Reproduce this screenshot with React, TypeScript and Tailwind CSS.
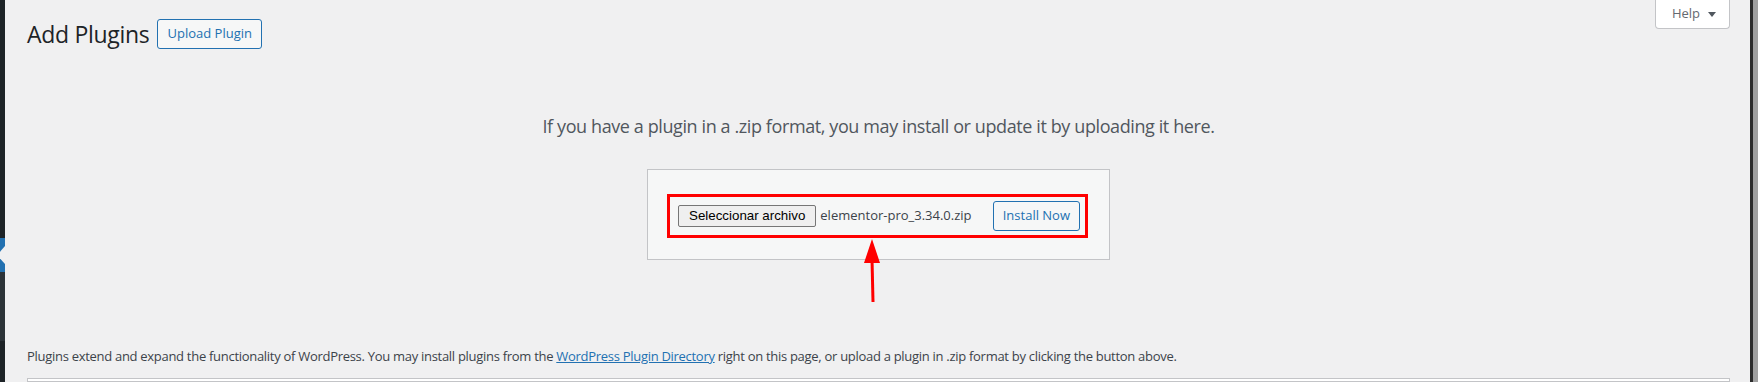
const sans = "font-['Segoe_UI','Open_Sans','Noto_Sans',sans-serif]";

function Sidebar() {
  return (
    <aside className="relative flex w-[5px] shrink-0 flex-col">
      <div className="h-[238px] bg-[#1d2327]" />
      <div className="relative h-[34px] bg-[#2271b1]">
        <svg className="absolute left-0 top-[8px]" width="5" height="18" viewBox="0 0 5 18">
          <polygon points="5,0 -3,9 5,18" fill="#f0f0f1" />
        </svg>
      </div>
      <div className="h-[69px] bg-[#2c3338]" />
      <div className="flex-1 bg-[#1d2327]" />
    </aside>
  );
}

function UploadForm() {
  return (
    <div className="relative border border-[#c3c4c7] bg-[#f6f7f7] pb-[21px] pl-[19px] pr-[21px] pt-[24px]">
      <div className="flex h-[44px] w-[421px] items-center border-[3px] border-[#ff0000] pl-[8px]">
        <button className="h-[22px] rounded-[2px] border border-[#767676] bg-[#efefef] px-[10px] font-['Liberation_Sans',Arial,sans-serif] text-[13.33px] leading-none text-black">
          Seleccionar archivo
        </button>
        <span className={`ml-[4px] text-[13px] text-[#3c434a] ${sans}`}>elementor-pro_3.34.0.zip</span>
        <button
          className={`ml-auto mr-[5px] h-[30px] rounded-[3px] border border-[#2271b1] bg-[#f6f7f7] px-[9px] text-[13px] text-[#2271b1] ${sans}`}
        >
          Install Now
        </button>
      </div>
      {/* annotation arrow */}
      <svg className="absolute left-[214px] top-[69px]" width="20" height="64" viewBox="0 0 20 64">
        <polygon points="10,0 2,24 18,24" fill="#ff0000" />
        <line x1="10" y1="20" x2="11" y2="63" stroke="#ff0000" strokeWidth="3" />
      </svg>
    </div>
  );
}

export default function App() {
  return (
    <div className={`flex h-[382px] w-[1758px] overflow-hidden bg-[#f0f0f1] ${sans}`}>
      <Sidebar />
      <main className="flex min-w-0 flex-1 flex-col pl-[22px] pr-[20px]">
        <div className="flex items-start justify-between">
          <div className="mt-[19px] flex h-[30px] items-center">
            <h1 className="text-[23px] font-normal leading-none tracking-[-0.3px] text-[#1d2327]">Add Plugins</h1>
            <button className="ml-[8px] h-[30px] rounded-[3px] border border-[#2271b1] bg-[#f6f7f7] px-[9px] text-[13px] text-[#2271b1]">
              Upload Plugin
            </button>
          </div>
          <button className="flex h-[29px] w-[75px] items-center justify-center gap-[8px] rounded-b-[4px] border border-t-0 border-[#c3c4c7] bg-white pl-[3px] text-[13px] text-[#646970]">
            Help
            <svg width="8" height="5" viewBox="0 0 8 5">
              <polygon points="0,0 8,0 4,5" fill="#50575e" />
            </svg>
          </button>
        </div>

        <p className="mt-[65px] text-center text-[18px] leading-[24px] tracking-[-0.4px] text-[#50575e]">
          If you have a plugin in a .zip format, you may install or update it by uploading it here.
        </p>

        <div className="mt-[31px] flex justify-center">
          <UploadForm />
        </div>

        <p className="mt-[87px] text-[13px] leading-[19px] tracking-[-0.29px] text-[#3c434a]">
          Plugins extend and expand the functionality of WordPress. You may install plugins from the{" "}
          <a href="#" className="text-[#2271b1] underline">
            WordPress Plugin Directory
          </a>{" "}
          right on this page, or upload a plugin in .zip format by clicking the button above.
        </p>

        <div className="mt-[12px] h-[40px] border border-[#c3c4c7] bg-white" />
      </main>
      <div className="w-[3px] shrink-0 bg-[#2c2c2c]" />
      <div className="w-[5px] shrink-0 bg-[#a0a0a0]" />
    </div>
  );
}
